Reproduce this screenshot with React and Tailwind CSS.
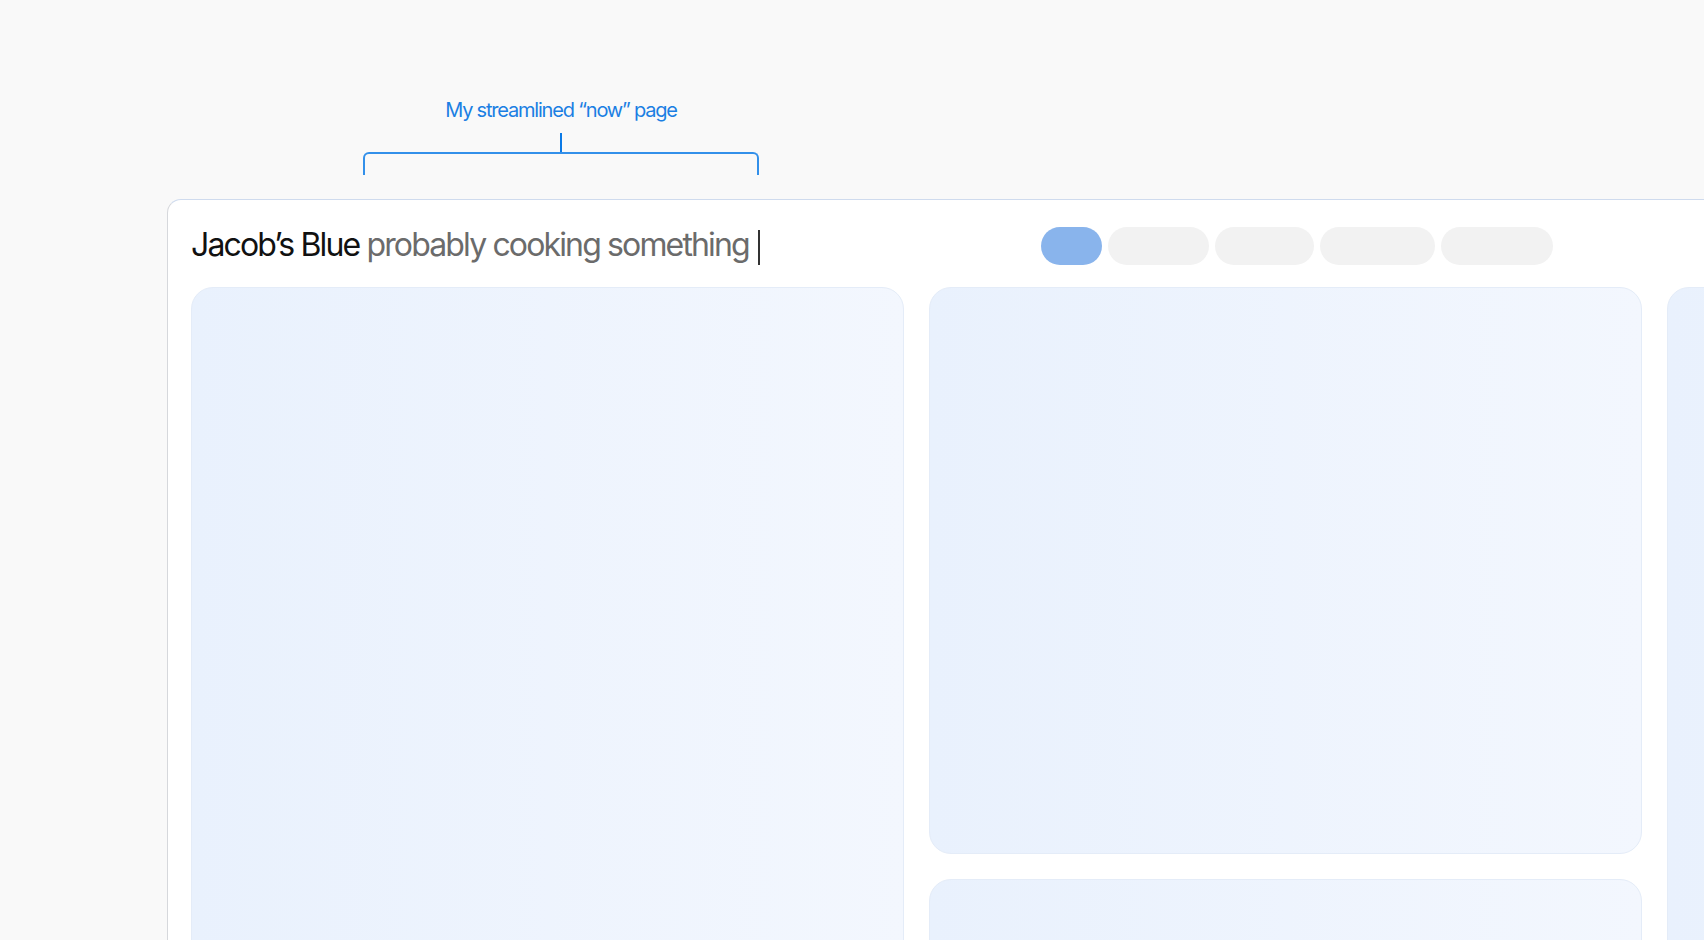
import React from 'react';

const pills = [
  { w: 'w-[61px]', active: true },
  { w: 'w-[101px]' },
  { w: 'w-[99px]' },
  { w: 'w-[115px]' },
  { w: 'w-[112px]' },
];

function Card({ className = '' }) {
  return (
    <div
      className={`rounded-[22px] border border-[#e4ecf8] bg-linear-to-r from-[#e9f1fd] to-[#f3f7fe] ${className}`}
    ></div>
  );
}

export default function App() {
  return (
    <div
      className="w-[1704px] h-[940px] overflow-hidden bg-[#f9f9f9] pt-[100px]"
      style={{ fontFamily: 'Inter, "Noto Sans", sans-serif' }}
    >
      {/* annotation */}
      <div className="ml-[363px] w-[396px] flex flex-col items-center">
        <div className="h-[20px] leading-[20px] text-[20px] tracking-[-0.06em] text-[#1b7fe3] whitespace-nowrap">
          My streamlined “now” page
        </div>
        <div className="mt-[13px] h-[19px] w-[2px] bg-[#0b7ae6]"></div>
        <div className="w-full h-[23px] border-t-2 border-x-2 border-[#3390ea] rounded-t-[6px]"></div>
      </div>

      {/* window */}
      <div className="ml-[167px] mt-[24px] w-[1600px] h-[800px] bg-white border border-[#d6d8dc] border-t-[#cfdbee] rounded-tl-[14px] pl-[23px] pt-[27px]">
        <div className="flex items-start">
          <div className="w-[850px] flex items-start mt-[2px]">
            <h1 className="text-[32px] leading-[32px] tracking-[-0.058em] whitespace-nowrap font-normal">
              <span className="text-[#111111]">Jacob’s Blue</span>{' '}
              <span className="text-[#6b6b6b]">probably cooking something</span>
            </h1>
            <span className="ml-[9px] mt-[1px] w-[2px] h-[35px] bg-[#333333]"></span>
          </div>
          <div className="flex gap-[6px]">
            {pills.map((p, i) => (
              <div
                key={i}
                className={`h-[38px] rounded-full ${p.w} ${p.active ? 'bg-[#89b4ec]' : 'bg-[#f2f2f2]'}`}
              ></div>
            ))}
          </div>
        </div>

        <div className="mt-[22px] grid grid-cols-[713px_713px_713px] gap-x-[25px]">
          <Card className="h-[700px]" />
          <div className="flex flex-col gap-[25px]">
            <Card className="h-[567px]" />
            <Card className="h-[200px]" />
          </div>
          <Card className="h-[700px]" />
        </div>
      </div>
    </div>
  );
}
